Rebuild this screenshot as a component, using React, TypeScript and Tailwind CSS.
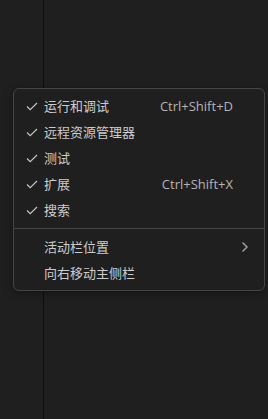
const items = [
  { label: "运行和调试", checked: true, shortcut: "Ctrl+Shift+D" },
  { label: "远程资源管理器", checked: true },
  { label: "测试", checked: true },
  { label: "扩展", checked: true, shortcut: "Ctrl+Shift+X" },
  { label: "搜索", checked: true },
];

const moreItems = [
  { label: "活动栏位置", submenu: true },
  { label: "向右移动主侧栏" },
];

function Check() {
  return (
    <svg width="16" height="16" viewBox="0 0 16 16" fill="none">
      <path d="M3 8.5l3.2 3.2L13 5" stroke="#c8c8c8" strokeWidth="1.1" />
    </svg>
  );
}

function Chevron() {
  return (
    <svg width="8" height="12" viewBox="0 0 8 12" fill="none">
      <path d="M1.5 1.5l4.5 4.5-4.5 4.5" stroke="#9a9a9a" strokeWidth="1.5" />
    </svg>
  );
}

type Item = { label: string; checked?: boolean; shortcut?: string; submenu?: boolean };

function Row({ item }: { item: Item }) {
  return (
    <div className="mx-1 h-[26px] flex items-center text-[13px] text-[#cccccc]">
      <div className="w-[26px] flex justify-center pl-[2px]">{item.checked ? <Check /> : null}</div>
      <div className="flex-1 leading-none">{item.label}</div>
      {item.shortcut && <div className="text-[13px] text-[#b4b4b4] leading-none">{item.shortcut}</div>}
      <div className="w-[27px] flex pl-[8px]">{item.submenu ? <Chevron /> : null}</div>
    </div>
  );
}

export default function App() {
  return (
    <div
      className="relative w-[268px] h-[419px] bg-[#1f1f1f] flex overflow-hidden"
      style={{ fontFamily: '"Open Sans", "Noto Sans CJK SC", sans-serif' }}
    >
      <div className="w-[44px] h-full border-r border-[#0f0f0f]" />
      <div className="flex-1" />
      <div className="absolute left-[13px] top-[88px] w-[252px] bg-[#1f1f1f] border border-[#454545] rounded-[6px] py-1 shadow-[0_2px_8px_rgba(0,0,0,0.36)]">
        {items.map((it) => (
          <Row key={it.label} item={it} />
        ))}
        <div className="my-[5px] h-px bg-[#454545]" />
        {moreItems.map((it) => (
          <Row key={it.label} item={it} />
        ))}
      </div>
    </div>
  );
}
